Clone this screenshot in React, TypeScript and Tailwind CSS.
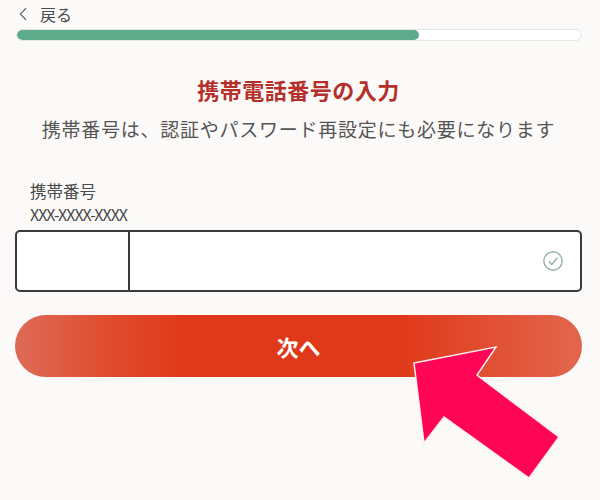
import { ChevronLeft } from 'lucide-react';

const font = { fontFamily: '"Noto Sans CJK JP", sans-serif' };

function CheckCircle() {
  return (
    <svg width="22" height="22" viewBox="0 0 22 22" fill="none" aria-hidden>
      <circle cx="11" cy="11" r="9.2" stroke="#93b3a7" strokeWidth="1.4" />
      <path d="M6.8 11.4l3 3 5.6-6.6" stroke="#93b3a7" strokeWidth="1.4" />
    </svg>
  );
}

function PointerArrow() {
  return (
    <svg className="absolute left-0 top-0" width="600" height="500" viewBox="0 0 600 500" aria-hidden>
      <polygon
        points="414,363 496,347 477,375 559,437 529,478 444,417 424,443"
        fill="#ff0558"
        stroke="#fdeee6"
        strokeWidth="1.5"
      />
    </svg>
  );
}

export default function App() {
  return (
    <div className="relative h-[500px] w-[600px] overflow-hidden bg-[#fcfaf9] text-[#4a4a4a]" style={font}>
      <div className="flex flex-col pl-[15px] pr-[18px] pt-[4px]">
        <div className="flex h-[20px] items-center text-[16px]">
          <ChevronLeft className="-ml-[3px] size-[22px] text-[#666]" strokeWidth={1.2} />
          <span className="ml-[6px]">戻る</span>
        </div>
        <div className="mt-[5px] ml-[1px] h-[12px] overflow-hidden rounded-full border border-[#e4e6e3] bg-white">
          <div className="h-full w-[71.2%] rounded-full bg-[#5dab8b]" />
        </div>

        <h1 className="mt-[33px] text-center text-[22px] leading-[30px] font-bold tracking-[0.5px] text-[#b5302a]">
          携帯電話番号の入力
        </h1>
        <p className="mt-[10px] text-center text-[19px] leading-[30px] tracking-[0.75px] text-[#555]">
          携帯番号は、認証やパスワード再設定にも必要になります
        </p>

        <div className="mt-[36px] pl-[15px] text-[16.5px] leading-[22px]">携帯番号</div>
        <div className="mt-[1px] pl-[15px] text-[16px] leading-[22px] tracking-[-1px]">XXX-XXXX-XXXX</div>

        <div className="mt-[5px] flex h-[62px] overflow-hidden rounded-[5px] border-2 border-[#3a3a3c] bg-white">
          <div className="w-[113px] border-r-2 border-[#3a3a3c]" />
          <div className="flex flex-1 items-center justify-end pr-[16px]">
            <CheckCircle />
          </div>
        </div>

        <button className="mt-[23px] h-[62px] rounded-full bg-[linear-gradient(90deg,#dd6b57_0%,#e04a2b_18%,#e0391a_30%,#e0391a_68%,#e2644a_98%)] text-[22px] font-bold text-white">
          次へ
        </button>
      </div>
      <PointerArrow />
    </div>
  );
}
